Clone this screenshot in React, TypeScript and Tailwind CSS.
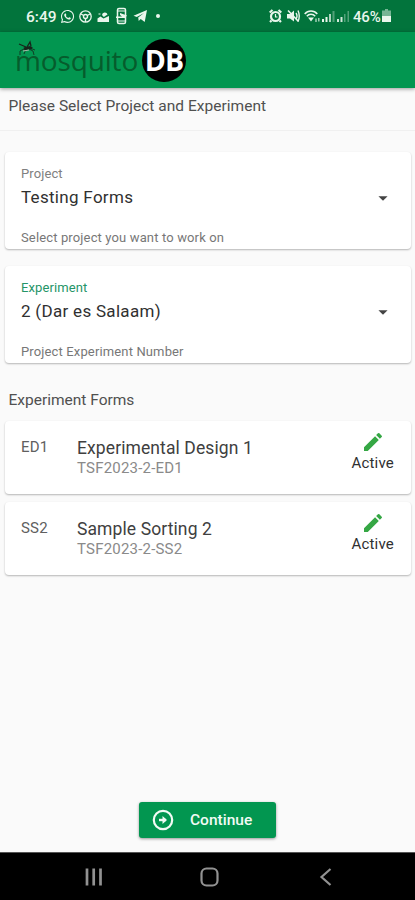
import React from "react";
import { FaWhatsapp } from "react-icons/fa";
import { MdArrowDropDown, MdEdit } from "react-icons/md";

type SelectCardProps = {
  label: string;
  value: string;
  hint: string;
  labelClass: string;
};

const forms = [
  { code: "ED1", name: "Experimental Design 1", id: "TSF2023-2-ED1" },
  { code: "SS2", name: "Sample Sorting 2", id: "TSF2023-2-SS2" },
];

function StatusBar() {
  return (
    <div className="h-8 shrink-0 bg-[#02743c] flex items-center pl-[26px] pr-[24px] text-[#e9f6ec]">
      <span className="text-[15.500px] leading-8 font-medium w-[34px] pt-[2px]">6:49</span>
      <FaWhatsapp className="w-[15px] h-[15px]" />
      <svg className="ml-[4px] w-[13px] h-[13px]" viewBox="0 0 13 13" fill="none" stroke="currentColor">
        <circle cx="6.5" cy="6.5" r="5.7" strokeWidth="1.3" />
        <circle cx="6.5" cy="6.5" r="2" strokeWidth="1.4" />
        <path d="M4.700 5.500L2 4M8.300 5.500L11 4M6.500 8.500V12" strokeWidth="1.4" />
      </svg>
      <svg className="ml-[5px] w-[13px] h-[13px]" viewBox="0 0 13 13" fill="currentColor">
        <path d="M.5 12V8.500l3-2 3 2L12 6v6z" />
        <path d="M5 5a2.800 2.800 0 0 1 5.500-.5L6.800 7z" />
        <path d="M1.500 3.500h2v1h-2z" />
      </svg>
      <svg className="ml-[5px] w-[13px] h-[18px]" viewBox="0 0 13 18" fill="none" stroke="currentColor" strokeWidth="1.5">
        <rect x="2.500" y="1.500" width="8" height="15" rx="1.500" />
        <path d="M3 4h7M3 14h7" strokeWidth="1.200" />
        <path d="M5 8V6l7 2.500L10 11H1v-1.500h6z" fill="currentColor" stroke="none" />
      </svg>
      <svg className="ml-[5px] w-[15px] h-[14px]" viewBox="0 0 15 14" fill="currentColor">
        <path d="M.5 6.800L14 1l-2.300 12-4-3-2 2-.5-3.600L11 4 3.800 8.100z" />
      </svg>
      <span className="ml-[8px] w-1 h-1 rounded-full bg-current" />

      <div className="ml-auto flex items-center">
        <svg className="w-[13px] h-[14px]" viewBox="0 0 13 14" fill="none" stroke="currentColor">
          <circle cx="6.500" cy="7.500" r="4.500" strokeWidth="2.200" />
          <path d="M.7 3.500L3.500 1M12.300 3.500L9.500 1M2.500 11.500L1 13M10.500 11.500L12 13" strokeWidth="2.200" />
          <path d="M6.500 5v3h2" strokeWidth="1.2" />
        </svg>
        <svg className="ml-[5px] w-[13px] h-[14px]" viewBox="0 0 13 14" fill="none" stroke="currentColor">
          <path d="M0 5h3l4-3.500v11L3 9.500H0z" fill="currentColor" stroke="none" />
          <path d="M9 4q2 3 0 6M11 1.500q2.500 5.500 0 11" strokeWidth="1.4" />
          <path d="M1 1.500l10.500 11" strokeWidth="1.6" />
        </svg>
        <svg className="ml-[4px] w-[17px] h-[15px]" viewBox="0 0 17 15" fill="none" stroke="currentColor" strokeWidth="1.5">
          <path d="M.7 5C4 1 10 1 13.300 5M2.800 7.300C5 4.600 9 4.600 11.200 7.300" />
          <path d="M4 8.500h6l-3 4z" fill="currentColor" stroke="none" />
          <path d="M12 9.500v3.500M14.800 9v3.500" strokeWidth="1.3" opacity=".8" />
        </svg>
        <svg className="ml-[1px] w-[13px] h-[14px]" viewBox="0 0 13 14" fill="currentColor">
          <path d="M0 10h2v3H0zM3.500 8h2v5h-2z" />
          <path d="M7 5h2v8H7z" opacity=".75" />
          <path d="M10.500 2h2v11h-2z" opacity=".35" />
        </svg>
        <svg className="ml-[2px] w-[13px] h-[14px]" viewBox="0 0 13 14" fill="currentColor">
          <path d="M0 10h2v3H0zM3.500 8h2v5h-2z" opacity=".9" />
          <path d="M7 5h1.500v8H7zM10.500 2h1.500v11h-1.500z" opacity=".35" />
        </svg>
        <span className="ml-[3px] w-[29px] text-[15px] leading-8 font-medium tracking-[-0.2px] pt-[2px]">46%</span>
        <svg className="w-[9px] h-[14px]" viewBox="0 0 9 14" fill="currentColor">
          <path d="M3 0h3v1.500h3V8H0V1.500h3z" opacity=".5" />
          <path d="M0 7h9v6H0z" />
        </svg>
      </div>
    </div>
  );
}

function AppBar() {
  return (
    <header className="relative z-10 h-14 shrink-0 bg-[#029650] shadow-[0_1px_4px_rgba(0,0,0,0.4)] flex items-center pl-[15px]">
      <div className="relative flex items-center">
        <span className="w-[127px] font-['Open_Sans'] text-[28px] leading-[40px] tracking-[-0.15px] font-medium text-[#065c2c] whitespace-nowrap">
          mosquito
        </span>
        <span className="w-[44px] h-[43px] rounded-full bg-black text-white font-['Open_Sans'] font-bold text-[28.500px] leading-[43px] flex justify-center tracking-[-0.8px]">
          DB
        </span>
        {/* Mosquito sitting on the "m" */}
        <svg className="absolute left-[2px] top-px w-[20px] h-[17px]" viewBox="0 0 20 17" fill="none" stroke="#17251b">
          <path d="M7 9l6-1.500 2 1" strokeWidth="3" />
          <path d="M9 7L2 4M10 7l3-5 1 4" strokeWidth="1.3" />
          <path d="M7 9L3 11v4M9 9l-2 5M12 9l4 2 1 4M13 8l5 2" strokeWidth=".8" />
          <path d="M6 11l6-1" stroke="#a9b9aa" strokeWidth="1" />
        </svg>
      </div>
    </header>
  );
}

function SelectCard({ label, value, hint, labelClass }: SelectCardProps) {
  return (
    <div className="h-[97px] ml-[5px] mr-[4px] px-4 pt-[14px] rounded-[4px] bg-white shadow-[0_1px_2px_rgba(0,0,0,0.28)]">
      <div className={`text-[13px] leading-4 tracking-[0.1px] ${labelClass}`}>{label}</div>
      <div className="flex items-center justify-between pr-[1px]">
        <span className="text-[17px] leading-[31px] text-[#303030] tracking-[0.3px]">{value}</span>
        <MdArrowDropDown className="w-[22px] h-[22px] text-[#444]" />
      </div>
      <div className="mt-[17px] text-[13px] leading-4 tracking-[0.14px] text-[#777]">{hint}</div>
    </div>
  );
}

function ContinueIcon() {
  return (
    <svg className="w-[22px] h-[22px]" viewBox="0 0 22 22" fill="none" stroke="currentColor">
      <circle cx="11" cy="11" r="9.200" strokeWidth="2.200" />
      <path d="M7 11h7" strokeWidth="2.400" />
      <path d="M10.500 7l4.500 4-4.500 4z" fill="currentColor" stroke="none" />
    </svg>
  );
}

export default function App() {
  return (
    <div className="w-full h-[900px] flex flex-col overflow-hidden bg-[#fafafa] font-[Roboto,sans-serif]">
      <StatusBar />
      <AppBar />

      <main className="flex-1 flex flex-col">
        <h1 className="h-[43px] pt-[8px] pl-[8.500px] border-b border-[#f0f0f0] text-[15.500px] leading-5 tracking-[0.02px] text-[#505050]">
          Please Select Project and Experiment
        </h1>

        <div className="pt-[21px] flex flex-col gap-[17px]">
          <SelectCard
            label="Project"
            value="Testing Forms"
            hint="Select project you want to work on"
            labelClass="text-[#808080]"
          />
          <SelectCard
            label="Experiment"
            value="2 (Dar es Salaam)"
            hint="Project Experiment Number"
            labelClass="text-[#259568]"
          />
        </div>

        <h2 className="mt-[27px] pl-[8.500px] text-[15.500px] leading-5 text-[#505050]">Experiment Forms</h2>

        <ul className="mt-[11px] pl-[5px] pr-[4px] flex flex-col gap-[8px]">
          {forms.map((form) => (
            <li
              key={form.code}
              className="h-[73px] flex rounded-[4px] bg-white shadow-[0_1px_2px_rgba(0,0,0,0.28)] pl-4 pr-[17px]"
            >
              <span className="w-[56px] pt-[16px] text-[15px] leading-5 tracking-[0.2px] text-[#606060]">{form.code}</span>
              <div className="flex-1 pt-[16px]">
                <div className="text-[17.500px] leading-[22px] text-[#404040] tracking-[0.1px]">{form.name}</div>
                <div className="text-[15px] leading-[18px] tracking-[0.2px] text-[#8a8a8a]">{form.id}</div>
              </div>
              <div className="pt-[9px] flex flex-col items-center">
                <MdEdit className="w-[24px] h-[24px] text-[#35a744]" />
                <span className="text-[15px] leading-[18px] tracking-[0.2px] text-[#303030]">Active</span>
              </div>
            </li>
          ))}
        </ul>

        <button className="mt-auto mb-[14px] self-center w-[137px] h-9 rounded-[3px] bg-[#029650] text-[#f2fbf5] flex items-center pl-[13px] shadow-[0_1px_3px_rgba(0,0,0,0.4)]">
          <ContinueIcon />
          <span className="ml-[16px] pt-px text-[15.500px] font-medium">Continue</span>
        </button>
      </main>

      <nav className="h-12 shrink-0 bg-black border-t border-[#555] text-[#929292]">
        <div className="h-full flex items-center pl-[84px] pr-[80px] gap-[96px]">
          <svg className="w-[20px] h-[20px]" viewBox="0 0 20 20" fill="none" stroke="currentColor" strokeWidth="2.700">
            <path d="M3 1.500v17M9.700 1.500v17M16.500 1.500v17" />
          </svg>
          <svg className="w-[20px] h-[20px]" viewBox="0 0 20 20" fill="none" stroke="currentColor" strokeWidth="2.200">
            <rect x="1.500" y="1.500" width="16" height="17" rx="5" />
          </svg>
          <svg className="w-[18px] h-[20px]" viewBox="0 0 18 20" fill="none" stroke="currentColor" strokeWidth="2.200">
            <path d="M14.500 2L5.500 10l9 8" />
          </svg>
        </div>
      </nav>
    </div>
  );
}
